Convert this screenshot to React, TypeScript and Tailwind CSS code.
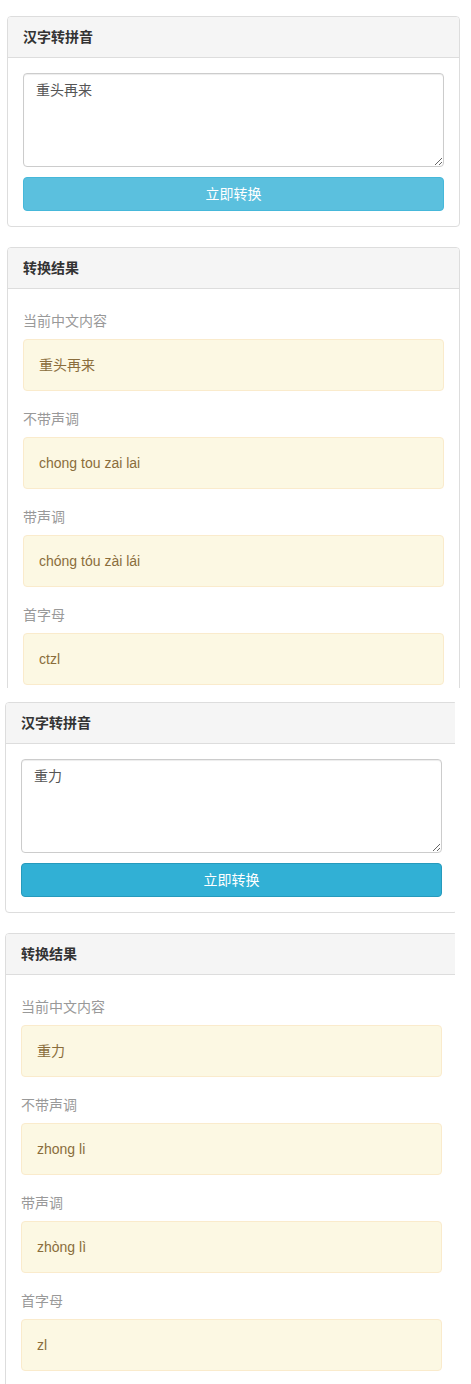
import React from 'react';

type Shot = {
  input: string;
  plain: string;
  tone: string;
  initials: string;
  hover?: boolean;
};

const shots: Shot[] = [
  { input: '重头再来', plain: 'chong tou zai lai', tone: 'chóng tóu zài lái', initials: 'ctzl' },
  { input: '重力', plain: 'zhong li', tone: 'zhòng lì', initials: 'zl', hover: true },
];

const font = "font-['Liberation_Sans','Noto_Sans_CJK_SC',sans-serif]";

const ResultRow: React.FC<{ label: string; value: string }> = ({ label, value }) => (
  <div>
    <div className="text-[14px] leading-[20px] text-[#999] mb-[8px]">{label}</div>
    <div className="bg-[#fcf8e3] border border-[#faebcc] rounded-[4px] px-[15px] py-[15px] text-[14px] leading-[20px] text-[#8a6d3b] mb-[18px]">
      {value}
    </div>
  </div>
);

const Screen: React.FC<{ shot: Shot; className: string }> = ({ shot, className }) => {
  const btn = shot.hover
    ? 'bg-[#31b0d5] border-[#269abc]'
    : 'bg-[#5bc0de] border-[#46b8da]';

  return (
    <div className={`overflow-hidden bg-white ${className}`}>
      <div className="w-[453px]">
        {/* input panel */}
        <div className="border border-[#ddd] rounded-[4px] mb-[20px] bg-white">
          <div className="bg-[#f5f5f5] border-b border-[#ddd] rounded-t-[3px] px-[15px] py-[10px] text-[14px] leading-[20px] font-bold text-[#333]">
            汉字转拼音
          </div>
          <div className="p-[15px]">
            <textarea
              defaultValue={shot.input}
              className={`${font} block w-full h-[94px] border border-[#ccc] rounded-[4px] px-[12px] py-[6px] text-[14px] leading-[20px] text-[#555] shadow-[inset_0_1px_1px_rgba(0,0,0,0.075)] outline-none`}
            />
            <button
              className={`${font} mt-[10px] block w-full h-[34px] border rounded-[4px] text-white text-[14px] leading-[20px] ${btn}`}
            >
              立即转换
            </button>
          </div>
        </div>

        {/* result panel */}
        <div className="border border-[#ddd] rounded-[4px] bg-white">
          <div className="bg-[#f5f5f5] border-b border-[#ddd] rounded-t-[3px] px-[15px] py-[10px] text-[14px] leading-[20px] font-bold text-[#333]">
            转换结果
          </div>
          <div className="px-[15px] pt-[22px] pb-[15px]">
            <ResultRow label="当前中文内容" value={shot.input} />
            <ResultRow label="不带声调" value={shot.plain} />
            <ResultRow label="带声调" value={shot.tone} />
            <ResultRow label="首字母" value={shot.initials} />
          </div>
        </div>
      </div>
    </div>
  );
};

export default function App() {
  return (
    <div className={`${font} bg-white w-[471px] h-[1384px] overflow-hidden`}>
      <Screen shot={shots[0]} className="h-[688px] pl-[7px] pt-[16px]" />
      <Screen shot={shots[1]} className="w-[455px] h-[696px] pl-[5px] pt-[14px]" />
    </div>
  );
}
